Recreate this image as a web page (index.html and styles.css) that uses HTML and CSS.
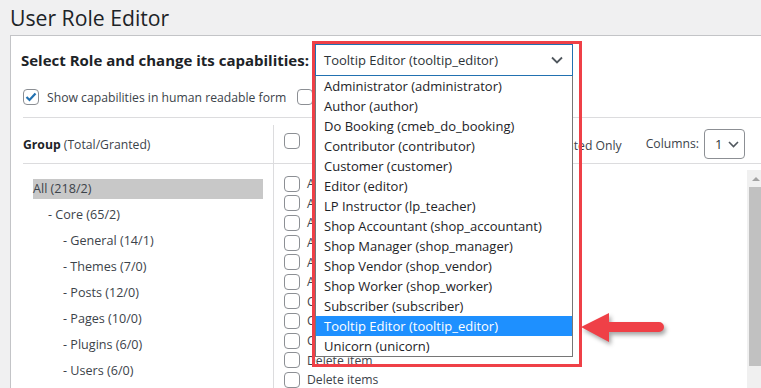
FILE: index.html
```html
<!DOCTYPE html>
<html lang="en">
<head>
<meta charset="utf-8">
<title>User Role Editor</title>
<link rel="stylesheet" href="styles.css">
</head>
<body>
<div class="wrap">
  <h1 class="title">User Role Editor</h1>
  <div class="panel">
    <div class="role-row">
      <span class="role-label">Select Role and change its capabilities:</span>
      <div class="role-select">
        <div class="select-box">
          <span>Tooltip Editor (tooltip_editor)</span>
          <svg class="chev" width="12" height="8" viewBox="0 0 12 8"><polyline points="1,1.5 6,6.5 11,1.5" fill="none" stroke="#50575e" stroke-width="1.8"/></svg>
        </div>
        <ul class="options">
          <li>Administrator (administrator)</li>
          <li>Author (author)</li>
          <li>Do Booking (cmeb_do_booking)</li>
          <li>Contributor (contributor)</li>
          <li>Customer (customer)</li>
          <li>Editor (editor)</li>
          <li>LP Instructor (lp_teacher)</li>
          <li>Shop Accountant (shop_accountant)</li>
          <li>Shop Manager (shop_manager)</li>
          <li>Shop Vendor (shop_vendor)</li>
          <li>Shop Worker (shop_worker)</li>
          <li>Subscriber (subscriber)</li>
          <li class="selected">Tooltip Editor (tooltip_editor)</li>
          <li>Unicorn (unicorn)</li>
        </ul>
      </div>
    </div>
    <div class="opts-row">
      <label class="opt"><span class="cb checked"><svg width="12" height="10" viewBox="0 0 12 10"><polyline points="1.5,5 4.5,8 10.5,1.5" fill="none" stroke="#2271b1" stroke-width="2.2"/></svg></span>Show capabilities in human readable form</label>
      <label class="opt opt2"><span class="cb"></span>Show deprecated capabilities</label>
    </div>
    <div class="caps">
      <div class="col-left">
        <div class="head"><b>Group</b>&nbsp;(Total/Granted)</div>
        <ul class="tree">
          <li class="active">All (218/2)</li>
          <li class="l1">- Core (65/2)</li>
          <li class="l2">- General (14/1)</li>
          <li class="l2">- Themes (7/0)</li>
          <li class="l2">- Posts (12/0)</li>
          <li class="l2">- Pages (10/0)</li>
          <li class="l2">- Plugins (6/0)</li>
          <li class="l2">- Users (6/0)</li>
        </ul>
      </div>
      <div class="col-right">
        <div class="head head-right">
          <span class="cb"></span>
          <span class="granted">Show Granted Only</span>
          <span class="columns">Columns:</span>
          <span class="col-select">1 <svg width="11" height="7" viewBox="0 0 11 7"><polyline points="1,1 5.5,5.5 10,1" fill="none" stroke="#50575e" stroke-width="1.6"/></svg></span>
        </div>
        <div class="cap-body">
          <ul class="cap-list">
            <li><span class="cb"></span>Activate plugins</li>
            <li><span class="cb"></span>Add users</li>
            <li><span class="cb"></span>Assign product terms</li>
            <li><span class="cb"></span>Assign shop coupon terms</li>
            <li><span class="cb"></span>Assign shop order terms</li>
            <li><span class="cb"></span>Assign terms</li>
            <li><span class="cb"></span>Create posts</li>
            <li><span class="cb"></span>Create users</li>
            <li><span class="cb"></span>Customize</li>
            <li><span class="cb"></span>Delete item</li>
            <li><span class="cb"></span>Delete items</li>
          </ul>
          <div class="scrollbar">
            <span class="arrow-up"></span>
            <span class="thumb"></span>
          </div>
        </div>
      </div>
    </div>
  </div>
</div>
<svg class="pointer" width="100" height="50" viewBox="0 0 100 50">
  <path d="M4 17 L32 3 L32 12 L82 12 A5 5 0 0 1 82 22 L32 22 L32 32 Z" fill="#ef4047"/>
</svg>
</body>
</html>
```
FILE: styles.css
```css
* { box-sizing: border-box; }
html, body { margin: 0; padding: 0; }
body {
  background: #f0f0f1;
  font-family: "Open Sans", "Noto Sans", sans-serif;
  color: #3c434a;
  font-size: 12.2px;
  overflow: hidden;
  height: 388px;
}
ul { list-style: none; margin: 0; padding: 0; }
.wrap { padding-left: 10px; }
.title {
  margin: 0;
  padding-top: 3px;
  font-size: 21.2px;
  font-weight: 400;
  line-height: 29px;
  height: 35px;
  color: #1d2327;
}
.panel {
  background: #fff;
  border: 1px solid #c3c4c7;
  margin-right: -30px;
  padding: 0 0 0 12px;
  height: 400px;
}
.role-row {
  display: flex;
  align-items: center;
  height: 32px;
  margin-top: 8px;
}
.role-label {
  font-weight: 700;
  font-size: 15px;
  color: #1d2327;
  margin-left: -2px;
  width: 294px;
  white-space: nowrap;
}
.role-select {
  position: relative;
  width: 258px;
  height: 32px;
  z-index: 5;
}
.role-select::after {
  content: "";
  position: absolute;
  left: -3px; top: -3px;
  width: 264px; height: 320px;
  border: 3px solid #ef4047;
  pointer-events: none;
}
.select-box {
  height: 32px;
  border: 1px solid #2271b1;
  background: #fff;
  display: flex;
  align-items: center;
  justify-content: space-between;
  padding: 0 8px 0 8px;
  font-size: 13px;
  color: #2c3338;
}
.chev { margin-right: 1px; }
.options {
  position: absolute;
  left: 0; top: 32px;
  width: 258px;
  background: #fff;
  border: 1px solid #767676;
  border-top: none;
  font-size: 13px;
  color: #1d2327;
}
.options li {
  height: 20px;
  line-height: 20px;
  padding-left: 8px;
  white-space: nowrap;
}
.options li.selected { background: #1e90ff; color: #fff; }

.opts-row {
  display: flex;
  align-items: center;
  margin-top: 13px;
  height: 16px;
}
.opt { display: flex; align-items: center; white-space: nowrap; }
.opt .cb { margin-right: 8px; }
.opt2 { margin-left: 11px; }
.cb {
  display: inline-flex;
  align-items: center;
  justify-content: center;
  width: 16px; height: 16px;
  border: 1px solid #8c8f94;
  border-radius: 4px;
  background: #fff;
  flex: none;
}
.caps {
  margin-top: 12px;
  border-top: 1px solid #dcdcde;
  display: grid;
  grid-template-columns: 250px 1fr;
  padding-top: 7px;
}
.head {
  height: 39px;
  border-bottom: 1px solid #dcdcde;
  display: flex;
  align-items: center;
}
.head b { color: #1d2327; }
.tree { padding: 15px 10px 0 10px; font-size: 12.6px; }
.tree li { height: 20px; line-height: 20px; margin-bottom: 6px; white-space: nowrap; }
.tree li.active { background: #c8c8c8; }
.tree li.l1 { padding-left: 15px; }
.tree li.l2 { padding-left: 30px; }

.col-right { border-left: 1px solid #dcdcde; }
.head-right { padding-left: 10px; padding-right: 45px; }
.head-right .cb { margin-top: -7px; }
.granted { margin-left: auto; margin-top: 3px; }
.columns { margin-left: 24px; margin-top: -2px; }
.col-select {
  margin-left: 5px;
  width: 41px; height: 30px;
  border: 1px solid #8c8f94;
  border-radius: 4px;
  display: flex;
  align-items: center;
  padding-left: 10px;
  gap: 6px;
  font-size: 13px;
  color: #2c3338;
}
.cap-body {
  display: flex;
  padding: 6px 0 0 10px;
}
.cap-list { flex: 1; padding-top: 4px; }
.cap-list li { display: flex; align-items: center; height: 19.6px; white-space: nowrap; }
.cap-list .cb { margin-right: 7px; }
.scrollbar {
  width: 17px;
  height: 230px;
  background: #f0f0f0;
  margin-right: 26px;
  display: flex;
  flex-direction: column;
  align-items: center;
}
.arrow-up {
  margin-top: 7px;
  width: 0; height: 0;
  border-left: 4px solid transparent;
  border-right: 4px solid transparent;
  border-bottom: 4px solid #a3a3a3;
}
.thumb {
  margin-top: 6px;
  width: 13px;
  height: 179px;
  background: #c1c1c1;
}
.pointer {
  position: absolute;
  left: 577px;
  top: 310px;
  filter: drop-shadow(2px 3px 2px rgba(0,0,0,0.35));
  z-index: 10;
}
```
